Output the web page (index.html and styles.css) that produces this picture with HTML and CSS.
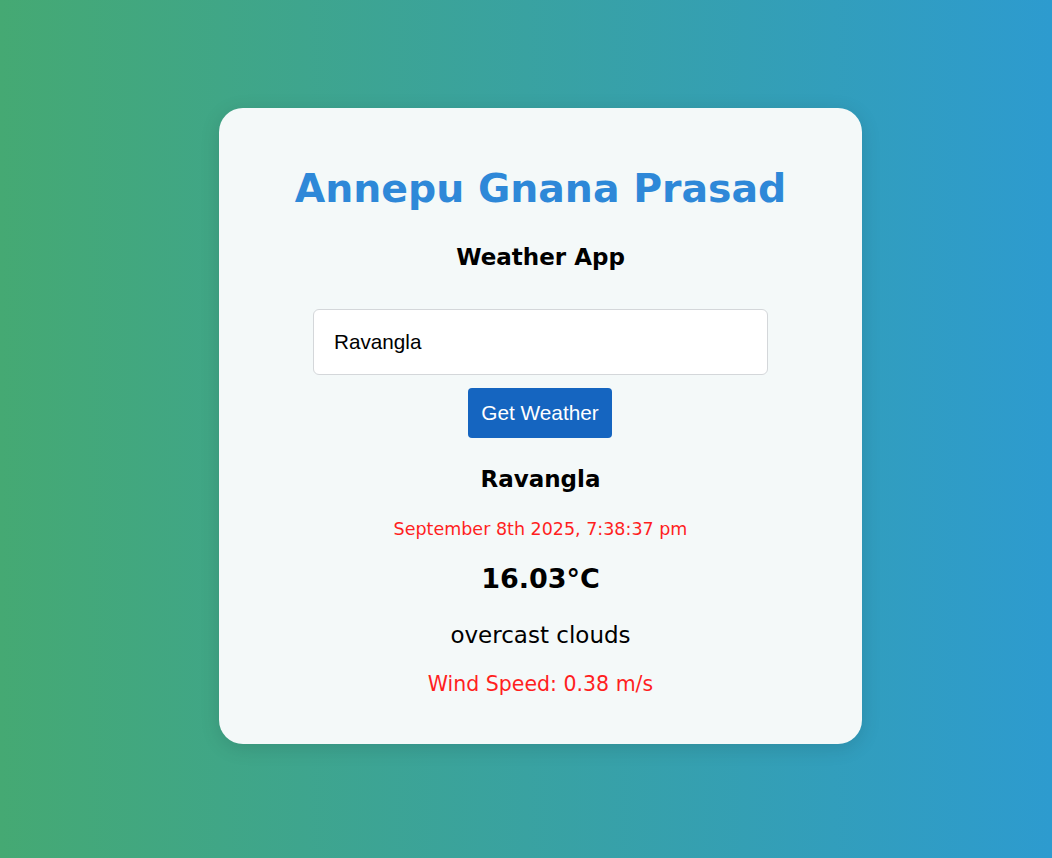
FILE: index.html
```html
<!DOCTYPE html>
<html lang="en">
<head>
<meta charset="utf-8">
<title>Weather App</title>
<link rel="stylesheet" href="styles.css">
</head>
<body>
<main class="page">
  <section class="card">
    <h1 class="title">Annepu Gnana Prasad</h1>
    <h2 class="subtitle">Weather App</h2>
    <input class="city-input" type="text" value="Ravangla">
    <button class="btn" type="button">Get Weather</button>
    <h3 class="city">Ravangla</h3>
    <p class="date">September 8th 2025, 7:38:37 pm</p>
    <p class="temp">16.03°C</p>
    <p class="desc">overcast clouds</p>
    <p class="wind">Wind Speed: 0.38 m/s</p>
  </section>
</main>
</body>
</html>
```
FILE: styles.css
```css
* { box-sizing: border-box; }
html, body { margin: 0; padding: 0; height: 100%; }
body {
  font-family: "DejaVu Sans", "Noto Sans", sans-serif;
  background: linear-gradient(to right, #45a973, #2d9bcf);
}
.page {
  min-height: 858px;
  display: flex;
  justify-content: center;
  align-items: flex-start;
  padding-top: 108px;
  padding-left: 29px;
}
.card {
  width: 643px;
  background: #f4f9f9;
  border-radius: 24px;
  box-shadow: 0 4px 20px rgba(0, 0, 0, 0.12);
  padding: 55px 40px 47px;
  display: flex;
  flex-direction: column;
  align-items: center;
  text-align: center;
}
.title {
  margin: 0;
  font-size: 39.4px;
  line-height: 50px;
  font-weight: 700;
  color: #2e88d8;
}
.subtitle {
  margin: 29px 0 0;
  font-size: 23px;
  line-height: 30px;
  font-weight: 700;
  color: #000;
}
.city-input {
  margin-top: 37px;
  width: 455px;
  height: 66px;
  border: 1px solid #d4d7da;
  border-radius: 6px;
  background: #fff;
  padding: 0 20px;
  font-family: "Liberation Sans", Arial, sans-serif;
  font-size: 20.7px;
  color: #000;
  outline: none;
}
.btn {
  margin-top: 13px;
  margin-left: -1px;
  width: 144px;
  height: 50px;
  border: none;
  border-radius: 4px;
  background: #1565c0;
  color: #fff;
  font-family: "Liberation Sans", Arial, sans-serif;
  font-size: 20.8px;
  padding: 0;
}
.city {
  margin: 26px 0 0;
  font-size: 23px;
  line-height: 30px;
  font-weight: 700;
  color: #000;
}
.date {
  margin: 23px 0 0;
  font-size: 17.5px;
  line-height: 24px;
  color: #ff1f1f;
}
.temp {
  margin: 18px 0 0;
  font-size: 27px;
  line-height: 40px;
  font-weight: 700;
  color: #000;
}
.desc {
  margin: 21px 0 0;
  font-size: 23px;
  line-height: 30px;
  color: #000;
}
.wind {
  margin: 21px 0 0;
  font-size: 20.5px;
  line-height: 26px;
  color: #ff1f1f;
}
```
